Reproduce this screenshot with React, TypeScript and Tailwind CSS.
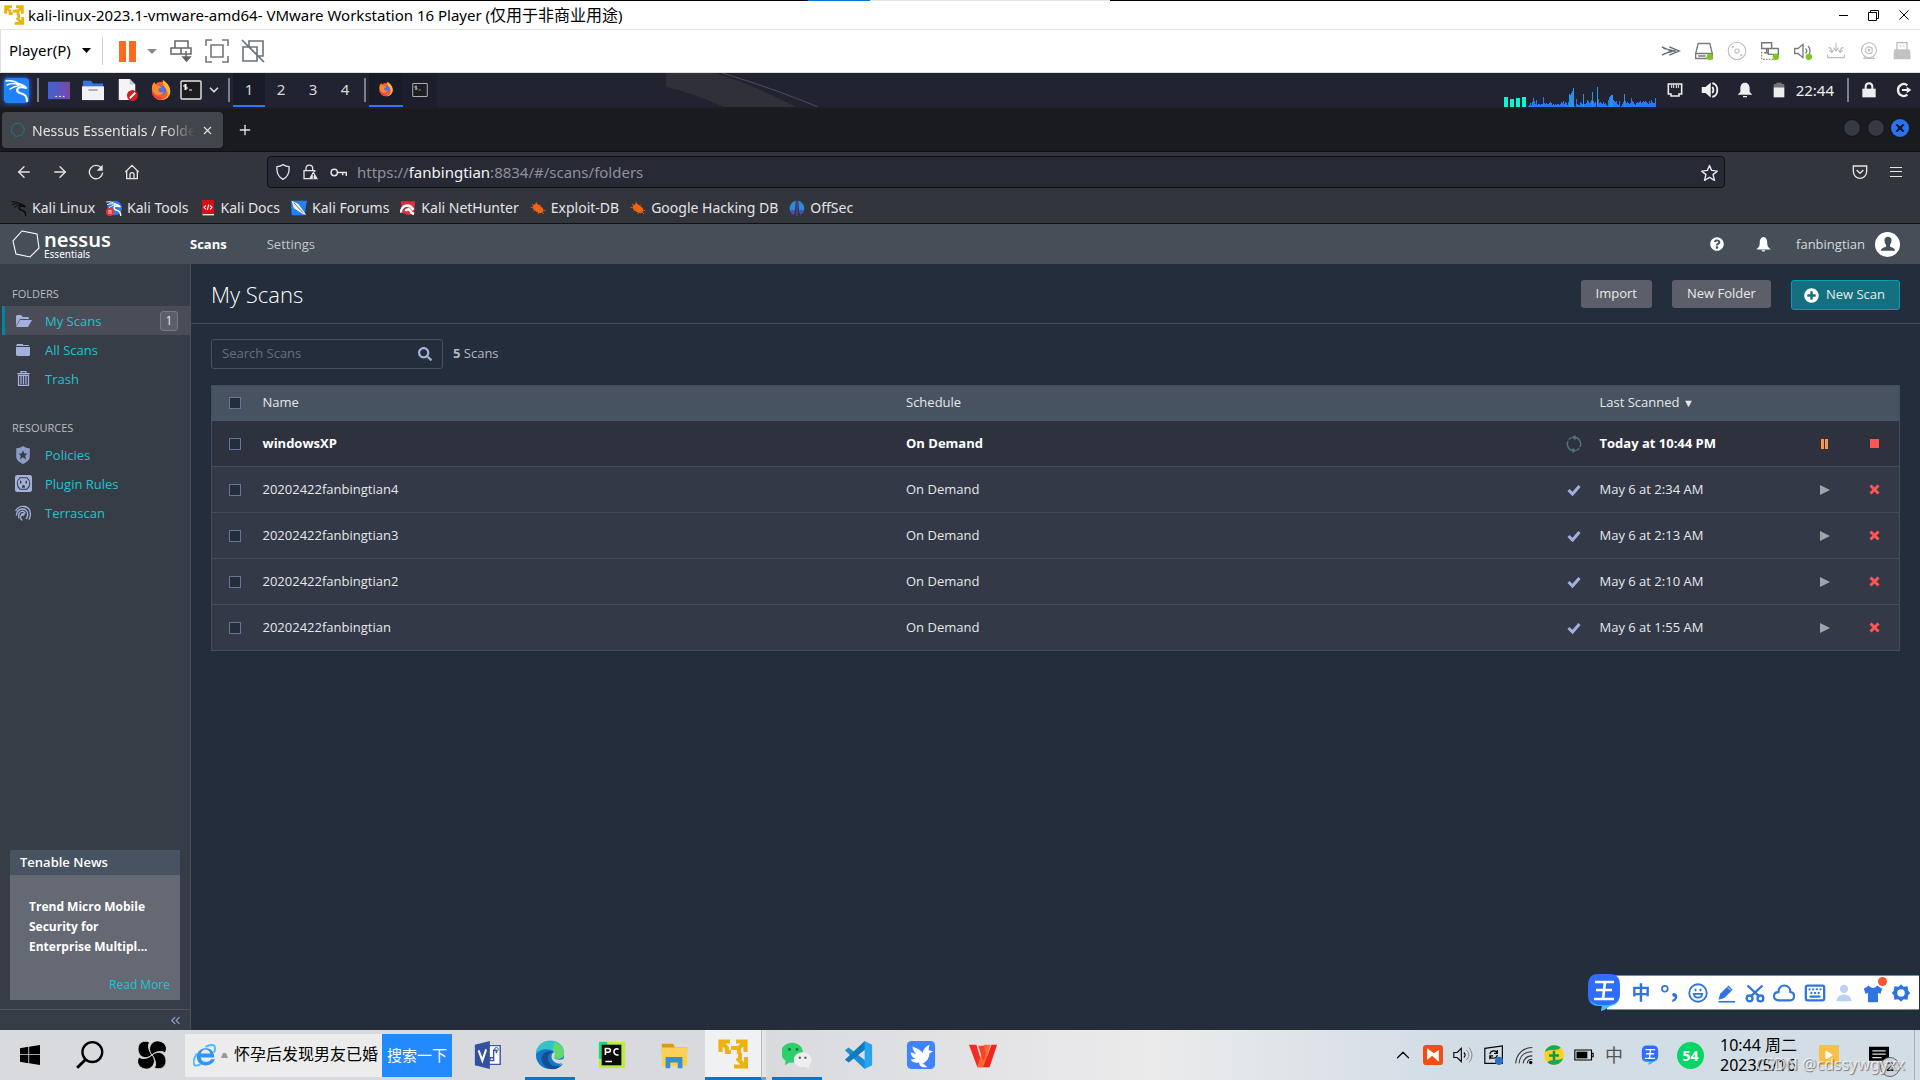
import React from 'react';
import { ArrowLeft, ArrowRight, ChevronDown, ChevronUp, ChevronsLeft, Keyboard, Plus, X } from 'lucide-react';
import { FaPlay, FaPlusCircle, FaQuestionCircle, FaSearch } from 'react-icons/fa';

interface SvgProps {
  className?: string;
  box?: string;
  children: React.ReactNode;
}

const Svg: React.FC<SvgProps> = ({ className = 'size-5', box = '0 0 24 24', children }) => (
  <svg viewBox={box} className={`shrink-0 ${className}`} fill="none" aria-hidden="true">
    {children}
  </svg>
);

interface SlotProps {
  label: string;
  className?: string;
  children: React.ReactNode;
}

const Slot: React.FC<SlotProps> = ({ label, className = '', children }) => (
  <button type="button" aria-label={label} className={`flex shrink-0 items-center justify-center ${className}`}>
    {children}
  </button>
);

/* ---------- shared drawings ---------- */

const VmwareLogo = ({ className = 'size-5' }) => (
  <Svg className={className} box="0 0 30 30">
    <path d="M12 2.500H2.500V13M2 2l7 7v4h4M18 2.500h9.500V13M28 2l-7 7h-8M21 9v6M22 14v6M28 18v9.500H16M28 28l-9-9" stroke="#edb30c" strokeWidth="4.200" />
  </Svg>
);

const Dragon = () => (
  <g stroke="currentColor" strokeLinecap="round" strokeLinejoin="round">
    <path d="M1 3c5-1 9 0 13 3M2 7c4-2 8-2 12 0M5 11c3-2 5-3 8-3" strokeWidth="1.5" />
    <path d="M14 6c3 1 6 2 7 4l-4-1c-6 0-6 5-2 6 5 1 7 3 7 8" strokeWidth="2.2" />
  </g>
);

const Firefox = ({ className = 'size-5' }) => (
  <Svg className={className}>
    <circle cx="12" cy="13" r="10" fill="#ff5a2b" />
    <path d="M14 1c5 3 9 8 8 14-1 5-5 8-10 8 5-1 8-4 7-9-1-4-6-6-5-13z" fill="#ffb92e" />
    <circle cx="12.5" cy="12.5" r="5.2" fill="#5b6fd8" />
    <path d="M2 11c0-4 1-6 3-8 0 2 1 3 3 4 2 0 3 1 5 2-2 1-4 1-4 3 1 3 4 3 6 2-1 4-7 5-10 2-2-2-2-4-3-5z" fill="#ff8a2a" />
    <path d="M2 13c1 7 8 10 13 8-6 0-10-3-13-8z" fill="#e52b5c" />
  </Svg>
);

const Wubi = ({ className = 'size-10' }) => (
  <Svg className={className} box="0 0 34 39">
    <path d="M11 1h12c7 0 10 4 10 11v9c0 6-3 10-9 11-3 2-5 5-10 6l1-5H11C4 33 1 29 1 22v-9C1 5 4 1 11 1z" fill="#2f6dff" />
    <path d="M3 27c3 5 12 6 20 5 5-1 8-3 9-6-1 5-6 7-9 7-3 2-5 4-9 5l1-5c-6 0-10-1-12-6z" fill="#42c4ff" />
    <path d="M8 9h19M9 17h16M7 26h20M18 9l-2 17" stroke="#fff" strokeWidth="2.6" />
  </Svg>
);

/* ---------- VMware window ---------- */

const TitleBar = () => (
  <header className="bg-white">
    <div className="flex h-px bg-black">
      <div className="ml-[42.1%] w-[3.2%] bg-[#0078d7]" />
      <div className="w-[12.5%] bg-[#e5e5e5]" />
    </div>
    <div className="flex h-[29px] items-center border-b border-[#e3e3e3] pl-1 pr-[6px] text-[15px] text-black">
      <VmwareLogo className="size-5" />
      <h1 className="ml-1 whitespace-nowrap">kali-linux-2023.1-vmware-amd64- VMware Workstation 16 Player (<span className="text-[16px] leading-5">仅用于非商业用途</span>)</h1>
      <div className="ml-auto flex gap-[10px]">
        <Slot label="Minimize" className="size-5"><Svg box="0 0 20 20"><path d="M5 10.500h9" stroke="#000" /></Svg></Slot>
        <Slot label="Restore" className="size-5"><Svg box="0 0 20 20"><path d="M4.500 7.500h8v8h-8zM6.500 7.500v-2h8v8h-2" stroke="#000" /></Svg></Slot>
        <Slot label="Close" className="size-5"><Svg box="0 0 20 20"><path d="M5.500 5.500l9 9M14.500 5.500l-9 9" stroke="#000" /></Svg></Slot>
      </div>
    </div>
  </header>
);

const GreenDot = () => <circle cx="19" cy="19" r="3.8" fill="#7ac818" />;

const devices = [
  { name: 'Collapse', art: <path d="M1 7l11 5-11 5M10 7l12 5-12 5M3 9l15 3-15 3" stroke="#5d6873" strokeWidth="1.5" /> },
  { name: 'Hard disk', art: <><path d="M5 3h14l3 12H2zM2 15v6h20v-6M5 18h9" stroke="#7b7b7b" strokeWidth="1.6" /><GreenDot /></> },
  { name: 'CD/DVD', art: <g stroke="#bdbdbd" strokeWidth="1.3"><circle cx="12" cy="12" r="10.500" /><circle cx="12" cy="12" r="2.500" /><path d="M6 8l2-2M16 18l2-2" strokeWidth="2" /></g> },
  { name: 'Network', art: <><path d="M2 2h12v7H2zM10 9h12v7H10zM8 9v5M5 14h6" stroke="#777" strokeWidth="1.7" /><path d="M2 13v9h14" stroke="#888" strokeDasharray="2 1.500" strokeWidth="1.5" /><GreenDot /></> },
  { name: 'Sound', art: <><path d="M2 9h4l6-5v16l-6-5H2zM15 9c2 2 2 4 0 6M18 6c3 3 3 8 1 11" stroke="#7b7b7b" strokeWidth="1.6" /><GreenDot /></> },
  { name: 'Printer', art: <path d="M12 2v9M9 8l3 4 3-4M3 8c3 0 4 2 4 5M4 11l3 3 2-3M21 8c-3 0-4 2-4 5M15 11l2 3 3-3M2 16v4h20v-4" stroke="#bdbdbd" strokeWidth="1.4" /> },
  { name: 'Camera', art: <g stroke="#bdbdbd" strokeWidth="1.3"><circle cx="12" cy="11" r="9" /><circle cx="12" cy="11" r="4" /><circle cx="12" cy="11" r="1" /><path d="M7 19l-1 2h12l-1-2" /></g> },
  { name: 'USB', art: <><path d="M6 11V2h12v9" stroke="#b5b5b5" strokeWidth="1.4" /><path d="M9 6h2M13 6h2" stroke="#b5b5b5" /><path d="M3 10h18l1 3v9H2v-9z" fill="#c2c2c2" /></> },
];

const VmToolbar = () => (
  <nav aria-label="Player toolbar" className="flex h-[43px] items-center border-b border-l border-[#e0e0e0] bg-white pl-2 pr-2 text-black">
    <button type="button" className="flex items-center gap-[11px] pb-[2px] text-[15px]">
      Player(P)
      <Svg className="h-[5px] w-[9px]" box="0 0 9 5"><path d="M0 0h9L4.500 5z" fill="#000" /></Svg>
    </button>
    <div className="ml-[11px] h-7 w-px bg-[#cfcfcf]" />
    <Slot label="Suspend" className="ml-4"><Svg className="h-[21px] w-[17px]" box="0 0 17 21"><path d="M0 0h7v21H0zM10 0h7v21h-7z" fill="#ff6a1f" /></Svg></Slot>
    <Slot label="Power menu" className="ml-[11px]"><Svg className="h-[5px] w-[10px]" box="0 0 10 5"><path d="M0 0h10L5 5z" fill="#888" /></Svg></Slot>
    <div className="ml-3 flex gap-3">
      <Slot label="Send keys"><Svg className="size-6"><g stroke="#666" strokeWidth="1.5"><path d="M6 2h13v7H6zM2 9h10v6H2zM12 9h10v6H12zM17 12v9" /><path d="M14 18l3.500 4 3.500-4z" fill="#555" /></g></Svg></Slot>
      <Slot label="Full screen"><Svg className="size-6"><path d="M1 7V1h6M17 1h6v6M23 17v6h-6M7 23H1v-6M6 6h12v12H6z" stroke="#777" strokeWidth="1.6" /></Svg></Slot>
      <Slot label="Unity"><Svg className="size-6"><path d="M8 8V2h14v15h-6M2 8h14v14H2zM1 1l22 22" stroke="#68727c" strokeWidth="1.6" /></Svg></Slot>
    </div>
    <div className="ml-auto flex gap-[13px]">
      {devices.map((d) => <Slot key={d.name} label={d.name}><Svg>{d.art}</Svg></Slot>)}
    </div>
  </nav>
);

/* ---------- Kali desktop panel ---------- */

const load = [
  1, 2, 4, 2, 5, 9, 6, 3, 7, 2, 3, 3, 2, 3, 3, 10, 4, 3, 4, 3, 3, 4, 5, 4, 2, 3, 2, 3, 2, 3, 3, 2, 3, 5, 4, 6, 3, 5, 4, 2, 5,
  13, 12, 14, 16, 19, 1, 0, 8, 3, 2, 2, 5, 4, 3, 13, 3, 3, 4, 7, 6, 4, 5, 7, 15, 6, 4, 5, 0, 20, 8, 4, 5, 4, 3, 5, 3, 4, 2, 1,
  7, 10, 11, 12, 12, 7, 6, 5, 6, 3, 2, 6, 0, 1, 3, 5, 13, 6, 4, 5, 4, 3, 4, 9, 6, 5, 3, 2, 4, 5, 4, 5, 6, 4, 5, 6, 5, 6, 5, 4, 3, 6, 4, 7, 5, 4, 4, 9,
];

const Terminal = ({ className = 'size-[22px]' }) => (
  <Svg className={className} box="0 0 22 20">
    <rect x="1" y="1" width="20" height="18" rx="1" fill="#1c1c1c" stroke="#e8e8e8" strokeWidth="1.4" />
    <path d="M7 5H4v2h3v2H4M5.500 4v6M9 10h3" stroke="#fff" />
  </Svg>
);

const Divider = ({ className = '' }) => <div className={`h-6 w-[2px] shrink-0 bg-[#7e7f87] ${className}`} />;

const KaliPanel = () => (
  <div className="relative flex h-9 items-center overflow-hidden border-b-2 border-[#1e1f25] bg-[#222331] text-[15px] text-[#d8d8dc]">
    <svg viewBox="0 0 190 34" className="absolute left-[34.7%] top-0 h-[34px] w-[190px]" aria-hidden="true">
      <path d="M0 0h50c30 10 55 21 80 34H58C42 27 20 18 0 14z" fill="#303138" />
      <path d="M56 0c30 9 65 21 96 34" stroke="#4d4e55" fill="none" />
    </svg>
    <div className="relative flex h-full items-center">
      <Slot label="Applications" className="ml-1 size-[25px] rounded-sm bg-[#1f82fb] text-white shadow-[0_0_5px_#2374ff]">
        <Svg className="size-6"><Dragon /></Svg>
      </Slot>
      <Divider className="ml-2" />
      <Slot label="Show desktop" className="ml-[9px]"><Svg className="size-[22px]"><path d="M0 3h24v19H0z" fill="url(#desk)" /><defs><linearGradient id="desk"><stop stopColor="#3f62d6" /><stop offset="1" stopColor="#7a48a5" /></linearGradient></defs><path d="M8 19h2m2 0h2m2 0h2" stroke="#fff" /></Svg></Slot>
      <Slot label="Files" className="ml-3"><Svg className="size-[22px]"><path d="M1 2h9l2 3h11v7H1z" fill="#3972e5" /><path d="M0 8h24v15H0z" fill="#f1f1f5" /><path d="M7 12h10" stroke="#aaa" strokeWidth="2" /></Svg></Slot>
      <Slot label="Text editor" className="ml-3"><Svg className="size-[22px]"><path d="M3 0h12l6 6v17H3z" fill="#f4f4f6" /><path d="M15 0v6h6z" fill="#c5c5cc" /><circle cx="18" cy="18" r="6" fill="#d41d20" /><path d="M15 21l6-6" stroke="#fff" strokeWidth="2" /></Svg></Slot>
      <Slot label="Firefox" className="ml-3"><Firefox className="size-[22px]" /></Slot>
      <Slot label="Terminal" className="ml-2"><Terminal /></Slot>
      <Slot label="More launchers" className="ml-[2px] size-5"><ChevronDown size={14} strokeWidth={3} /></Slot>
      <Divider className="ml-1" />
      <div className="ml-[3px] flex h-full">
        <button type="button" className="w-8 border-b-2 border-[#2a78f5] bg-[#1a1b29]">1</button>
        {['2', '3', '4'].map((n) => <button key={n} type="button" className="w-8 border-b-2 border-transparent">{n}</button>)}
      </div>
      <Divider className="ml-[3px]" />
      <Slot label="Nessus window" className="ml-[3px] h-full w-[34px] border-b-2 border-[#2a78f5] bg-[#1a1b29]"><Firefox className="size-4" /></Slot>
      <Slot label="Terminal window" className="h-full w-[34px] bg-[#1c1d29] opacity-70"><Terminal className="size-4" /></Slot>
    </div>
    <div className="relative ml-auto flex h-full items-center pr-2 text-[#eee]">
      <svg viewBox="0 0 152 34" className="h-[34px] w-[152px]" aria-hidden="true">
        <path d="M0 24h4v10H0zM6 26h4v8H6zM12 25h4v9h-4zM18 24h4v10h-4z" fill="#0ff5d4" />
        {load.map((v, i) => <rect key={i} x={24 + i} y={34 - v} width="1" height={v} fill={v > 10 ? '#2794e8' : '#2878f8'} />)}
      </svg>
      <Slot label="Network" className="ml-[11px]"><Svg className="size-4"><path d="M2 3h20v15h-4v3H6v-3H2z" stroke="#eee" strokeWidth="2.400" /><path d="M7 4v5m3-5v5m4-5v5m3-5v5" stroke="#eee" strokeWidth="1.5" /></Svg></Slot>
      <Slot label="Volume" className="ml-[18px]"><Svg className="size-[18px]"><path d="M1 8h5l7-6v20l-7-6H1z" fill="#eee" /><path d="M15 8c2 2 2 6 0 8M15 3c9 1 9 17 0 18" stroke="#eee" strokeWidth="2.500" /></Svg></Slot>
      <Slot label="Notifications" className="ml-[18px]"><Svg className="size-4"><path d="M12 1c5 0 7 4 7 9v5l4 4H1l4-4v-5c0-5 2-9 7-9zM9 21h6v2H9z" fill="#eee" /></Svg></Slot>
      <Slot label="Battery" className="ml-[18px]"><Svg className="size-4"><path d="M8 1h8v2h4v5H4V3h4z" fill="#777" /><path d="M4 8h16v15H4z" fill="#eee" /></Svg></Slot>
      <time className="ml-[9px]">22:44</time>
      <Divider className="ml-[13px]" />
      <Slot label="Lock" className="ml-3"><Svg className="size-4"><path d="M7 11V7c0-7 10-7 10 0v4" stroke="#eee" strokeWidth="3" /><path d="M2 10h20v13H2z" fill="#eee" /></Svg></Slot>
      <Slot label="Log out" className="ml-[19px]"><Svg className="size-4"><path d="M17 5c-6-5-14 0-14 7s8 12 14 7" stroke="#eee" strokeWidth="3.500" /><path d="M9 12h8" stroke="#eee" strokeWidth="3" /><path d="M16 7l7 5-7 5z" fill="#eee" /></Svg></Slot>
    </div>
  </div>
);

/* ---------- Firefox ---------- */

const bookmarks = [
  { label: 'Kali Linux', art: <g className="text-[#0c0c0e]"><Dragon /></g> },
  { label: 'Kali Tools', art: <><circle cx="13" cy="12" r="11" fill="#2d78ee" /><g className="text-white"><Dragon /></g><circle cx="6" cy="18" r="6" fill="#ee2c35" /><path d="M4 16h4M4.500 16v5M7.500 16v5" stroke="#fff" /></> },
  { label: 'Kali Docs', art: <><path d="M3 0h18v23H3z" fill="#d60f16" /><path d="M4 22h17" stroke="#eee" strokeWidth="2" /><path d="M9 8l-3 3 3 3M15 8l3 3-3 3M13 7l-2 8" stroke="#fff" strokeWidth="1.6" /></> },
  { label: 'Kali Forums', art: <><path d="M0 1h24l-4 22H1z" fill="#2580f5" /><path d="M1 1l10 5 8 11 4 6-7-3L4 12z" fill="#f3f3f3" /><path d="M4 4l14 15" stroke="#333" /></> },
  { label: 'Kali NetHunter', art: <><path d="M1 2h22l-2 18-8 3-9-3z" fill="#e22b3c" /><path d="M2 19c0-11 12-15 18-4M9 17c1-5 6-4 8 2l4 2" stroke="#fff" strokeWidth="4" /><path d="M3 20c0-7 6-9 9-8" stroke="#222" /></> },
  { label: 'Exploit-DB', art: <Bug /> },
  { label: 'Google Hacking DB', art: <Bug /> },
  { label: 'OffSec', art: <><path d="M10 1C-2 5-1 19 7 22c2-5 3-14 3-21zM14 1c12 4 11 18 3 21-2-5-3-14-3-21z" fill="#2f8ad6" /><path d="M2 15c1 4 3 6 5 7l2-7zM22 15c-1 4-3 6-5 7l-2-7z" fill="#5044c8" /><path d="M12 1v23" stroke="#6a45d8" strokeWidth="1.500" /></> },
];

function Bug() {
  return (
    <g>
      <path d="M4 9l5-4 4 2 6 5 1 5-4 3-6-2-5-4z" fill="#ef6313" />
      <path d="M3 6l5 4M9 3l2 5M16 7l-2 3M23 16l-4-1M21 21l-3-3M12 21l1-3M5 17l3-3M1 11l5 1" stroke="#ef6313" strokeWidth="1.3" />
    </g>
  );
}

const Browser = () => (
  <div className="text-[15px] text-[#e4e4e8]">
    <div className="flex h-[43px] items-center border-b border-[#0f1014] bg-[#1a1b1f] pb-1 pl-[2px] pr-[11px]">
      <div role="tab" aria-selected="true" className="mt-1 flex h-9 w-[221px] items-center rounded bg-[#43454c] px-2 shadow">
        <Svg className="size-4"><path d="M8 2l9 1 5 8-4 8-9 3-7-7 1-8z" stroke="#21707d" strokeWidth="1.6" /></Svg>
        <div className="ml-[6px] flex-1 overflow-hidden whitespace-nowrap text-[14px] [mask-image:linear-gradient(to_right,black_82%,transparent)]">Nessus Essentials / Folder</div>
        <Slot label="Close tab" className="ml-1 size-4"><X size={13} strokeWidth={2} /></Slot>
      </div>
      <Slot label="New tab" className="ml-3 mt-1 size-5"><Plus size={16} strokeWidth={2} /></Slot>
      <div className="ml-auto flex gap-[6px]">
        <button type="button" aria-label="Minimize window" className="size-[18px] rounded-full border border-[#101115] bg-[#343944]" />
        <button type="button" aria-label="Maximize window" className="size-[18px] rounded-full border border-[#101115] bg-[#343944]" />
        <Slot label="Close window" className="size-[18px] rounded-full bg-[#2a73f0] text-[#101522]"><X size={12} strokeWidth={4} /></Slot>
      </div>
    </div>
    <div className="flex h-10 items-center bg-[#33353c] pl-[14px] pr-4">
      <div className="flex gap-4">
        <Slot label="Back" className="size-5"><ArrowLeft size={18} strokeWidth={1.8} /></Slot>
        <Slot label="Forward" className="size-5"><ArrowRight size={18} strokeWidth={1.8} /></Slot>
        <Slot label="Reload" className="size-5"><Svg className="size-4"><path d="M20 6a10 10 0 1 0 2 7" stroke="currentColor" strokeWidth="2" /><path d="M22 1v9h-9z" fill="currentColor" /></Svg></Slot>
        <Slot label="Home" className="size-5"><Svg className="size-4"><path d="M2 12L12 2l10 10M4 10v12h16V10M9 22v-6c0-4 6-4 6 0v6" stroke="currentColor" strokeWidth="2" /></Svg></Slot>
      </div>
      <div className="ml-[125px] flex h-8 w-full max-w-[1458px] items-center rounded border border-[#0d0e14] bg-[#272935] pl-[7px] pr-[6px]">
        <Svg className="size-4"><path d="M12 1c3 2 6 3 9 3 1 10-3 16-9 19C6 20 2 14 3 4c3 0 6-1 9-3z" stroke="currentColor" strokeWidth="2" /></Svg>
        <Svg className="ml-[11px] size-4"><path d="M6 10V7c0-7 10-7 10 0v3M11 22H3V10h16v2" stroke="currentColor" strokeWidth="2" /><path d="M17 11l7 12H10z" fill="currentColor" /><path d="M17 15v4m0 1v2" stroke="#272935" strokeWidth="1.6" /></Svg>
        <Svg className="ml-3 size-[17px]"><circle cx="6" cy="12" r="4.500" stroke="currentColor" strokeWidth="2" /><path d="M11 12h12v5M18 12v4" stroke="currentColor" strokeWidth="2" /></Svg>
        <a href="#/scans/folders" className="ml-[10px] text-[#8f9099]">https://<span className="text-[#f3f3f6]">fanbingtian</span>:8834/#/scans/folders</a>
        <Slot label="Bookmark" className="ml-auto"><Svg className="size-[17px]"><path d="M12 2l3 7 8 1-6 5 2 8-7-4-7 4 2-8-6-5 8-1z" stroke="currentColor" strokeWidth="2" strokeLinejoin="round" /></Svg></Slot>
      </div>
      <Slot label="Pocket" className="ml-auto"><Svg className="size-4"><path d="M2 3h20v8c0 14-20 14-20 0z" stroke="currentColor" strokeWidth="2" /><path d="M7 9l5 5 5-5" stroke="currentColor" strokeWidth="2" /></Svg></Slot>
      <Slot label="Menu" className="ml-5"><Svg className="size-4" box="0 0 16 16"><path d="M2 3.500h12M2 7.500h12M2 12.500h12" stroke="currentColor" /></Svg></Slot>
    </div>
    <nav aria-label="Bookmarks" className="flex h-8 items-center gap-[11px] border-b border-[#111217] bg-[#33353c] pl-[11px] text-[14px]">
      {bookmarks.map((b) => (
        <a key={b.label} href="#" className="flex items-center gap-[5px] whitespace-nowrap">
          <Svg className="size-4">{b.art}</Svg>
          {b.label}
        </a>
      ))}
    </nav>
  </div>
);

/* ---------- Nessus ---------- */

const NessusHeader = () => (
  <header className="flex h-10 items-center bg-[#464e57] pl-3 pr-5 font-['Open_Sans',sans-serif] text-[13px] text-[#d5d8dc]">
    <a href="#" aria-label="Nessus Essentials" className="flex w-[178px] items-center gap-1 text-white">
      <Svg className="size-7" box="0 0 28 28"><path d="M10 1l15 3 2 14-9 9-14-3L1 11z" stroke="currentColor" strokeWidth="1.1" /></Svg>
      <div className="flex flex-col pt-[2px] font-['Noto_Sans',sans-serif]">
        <span className="text-[20px] font-semibold leading-[17px]">nessus</span>
        <span className="text-[10px] leading-3">Essentials</span>
      </div>
    </a>
    <nav className="flex gap-10 pt-px">
      <a href="#/scans" className="font-bold text-white">Scans</a>
      <a href="#/settings" className="text-[#c3c7cc]">Settings</a>
    </nav>
    <Slot label="Help" className="ml-auto text-white"><FaQuestionCircle size={14} /></Slot>
    <Slot label="Alerts" className="ml-8 text-white"><Svg className="size-[15px]"><path d="M12 0c5 1 6 5 6 10 0 5 2 7 5 9v1H1v-1c3-2 5-4 5-9 0-5 1-9 6-10zM9 21h6c0 3-6 3-6 0z" fill="#fff" /></Svg></Slot>
    <span className="ml-[25px] pt-px">fanbingtian</span>
    <Slot label="Account" className="ml-[10px] size-[25px] rounded-full bg-white"><Svg className="size-4"><path d="M12 1c7 0 6 8 3 12v3c3 1 7 2 8 6H1c1-4 5-5 8-6v-3C6 9 5 1 12 1z" fill="#464e57" /></Svg></Slot>
  </header>
);

const folders = [
  { label: 'My Scans', icon: <Svg className="h-[14px] w-[17px]" box="0 0 17 14"><path d="M1 11V2l1-1h4l2 2h5l1 1v1H5L1 12z" fill="currentColor" /><path d="M5 6h12l-4 7H1z" fill="currentColor" /></Svg>, count: 1 },
  { label: 'All Scans', icon: <Svg className="h-[14px] w-[14px]" box="0 0 14 14"><path d="M1 1h6v1h6v1H0zM0 4h14v8l-1 1H1l-1-1z" fill="currentColor" /></Svg> },
  { label: 'Trash', icon: <Svg className="size-[15px]"><path d="M4 7h16v16H4zM2 4h20M8 4V1h8v3" stroke="currentColor" strokeWidth="2" /><path d="M8 8v13m4-13v13m4-13v13" stroke="currentColor" strokeWidth="2" /></Svg> },
];

const resources = [
  { label: 'Policies', icon: <Svg className="size-[18px]"><path d="M12 0c3 2 6 3 9 3v12c0 4-5 7-9 9-4-2-9-5-9-9V3c3 0 6-1 9-3z" fill="#8d9cc6" /><path d="M12 6l2 4h4l-3 3 1 5-4-3-4 3 1-5-3-3h4z" fill="#373d46" /></Svg> },
  { label: 'Plugin Rules', icon: <Svg className="size-[17px]"><rect width="24" height="24" rx="3" fill="#a3b0dc" /><path d="M7 4h10c5 4 5 12 0 16H7C2 16 2 8 7 4z" stroke="#373d46" strokeWidth="1.500" /><path d="M8 8v4m8-4v4" stroke="#373d46" strokeWidth="2" /><path d="M10 18c-1-5 5-5 4 0z" fill="#373d46" /></Svg> },
  { label: 'Terrascan', icon: <Svg className="size-4"><path d="M1 9C6-2 24 0 23 15c0 3-1 5-2 7M2 16C3 3 19 3 19 14c0 4-1 6-3 7M6 20C3 8 15 7 15 13M11 23c-4-2-3-5-1-9" stroke="#a3b0dc" strokeWidth="2" /><circle cx="12" cy="14" r="2.500" fill="#a3b0dc" /></Svg> },
];

interface SideItemProps {
  label: string;
  icon: React.ReactNode;
  count?: number;
}

const SideItem: React.FC<SideItemProps> = ({ label, icon, count }) => (
  <li>
    <a href="#" className={`ml-[2px] flex h-[29px] items-center border-l-[3px] pr-3 text-[13px] text-[#1fc3d1] ${count ? 'border-[#00889a] bg-[#4a4d57]' : 'border-transparent'}`}>
      <span className="ml-2 flex w-5 justify-center text-[#a3b0dc]">{icon}</span>
      <span className="ml-3 pt-[2px]">{label}</span>
      {count && <span className="ml-auto flex h-5 w-[18px] items-center justify-center rounded-[3px] border border-[#777a82] bg-[#5c5f69] text-[12px] text-[#eee]">{count}</span>}
    </a>
  </li>
);

const Sidebar = () => (
  <aside className="flex w-[191px] shrink-0 flex-col border-r border-[#4a4f59] bg-[#373d46]">
    <h2 className="mt-[18px] pl-3 text-[11px] leading-6 text-[#b9bcc1]">FOLDERS</h2>
    <ul>{folders.map((f) => <SideItem key={f.label} {...f} />)}</ul>
    <h2 className="mt-[23px] pl-3 text-[11px] leading-6 text-[#b9bcc1]">RESOURCES</h2>
    <ul>{resources.map((r) => <SideItem key={r.label} {...r} />)}</ul>
    <section className="mx-[10px] mt-auto">
      <h2 className="bg-[#475361] pl-[10px] text-[13px] font-semibold leading-[25px] text-white">Tenable News</h2>
      <div className="bg-[#656974] px-[10px] pb-[5px] pt-[22px] text-[12px]">
        <p className="pl-[9px] font-bold leading-5 text-white">Trend Micro Mobile<br />Security for<br />Enterprise Multipl...</p>
        <a href="#" className="mt-[18px] block text-right leading-5 text-[#1fc3d1]">Read More</a>
      </div>
    </section>
    <div className="mt-[9px] flex h-[21px] items-center justify-end border-t border-[#4f535d] pr-[7px]">
      <Slot label="Collapse sidebar" className="text-[#8f9dc4]"><ChevronsLeft size={15} strokeWidth={2} /></Slot>
    </div>
  </aside>
);

const scans = [
  { name: 'windowsXP', when: 'Today at 10:44 PM', running: true },
  { name: '20202422fanbingtian4', when: 'May 6 at 2:34 AM' },
  { name: '20202422fanbingtian3', when: 'May 6 at 2:13 AM' },
  { name: '20202422fanbingtian2', when: 'May 6 at 2:10 AM' },
  { name: '20202422fanbingtian', when: 'May 6 at 1:55 AM' },
];

const Tick = ({ label }: { label: string }) => (
  <input type="checkbox" aria-label={label} className="ml-[17px] block size-3 appearance-none border border-[#65769a] bg-[#242d3b]" />
);

const ScanTable = () => (
  <table className="mt-4 w-full table-fixed border-collapse border border-[#464c59] text-left text-[13px] text-[#e6e8ea]">
    <colgroup>
      <col className="w-[51px]" />
      <col />
      <col />
      <col className="w-[50px]" />
      <col className="w-[200px]" />
      <col className="w-[50px]" />
      <col className="w-[50px]" />
    </colgroup>
    <thead>
      <tr className="h-[35px] border-b border-[#4c5362] bg-[#475361]">
        <th><Tick label="Select all scans" /></th>
        <th className="font-normal">Name</th>
        <th className="font-normal">Schedule</th>
        <th aria-label="Status" />
        <th className="font-normal">Last Scanned <span className="text-[11px]">▼</span></th>
        <th aria-label="Control" />
        <th aria-label="Delete" />
      </tr>
    </thead>
    <tbody>
      {scans.map((s) => (
        <tr key={s.name} className={`h-[46px] border-b border-[#464c59] ${s.running ? 'bg-[#2d323e] font-bold text-white' : 'bg-[#333947]'}`}>
          <td><Tick label={`Select ${s.name}`} /></td>
          <td>{s.name}</td>
          <td>On Demand</td>
          <td>
            <div className="flex justify-center pr-px text-[#a3b0dc]">
              {s.running ? (
                <Svg className="size-[18px]"><path d="M13 3a9 9 0 0 1 7 13M11 21A9 9 0 0 1 4 8" stroke="#4f7878" strokeWidth="2" /><path d="M14 0v7l-5-4zM10 24v-7l5 4z" fill="#4f7878" /><path d="M9 3.500C7 4 6 5 5 6M15 20.500c2-.5 3-1.500 4-2.500" stroke="#4f7878" strokeWidth="2" /></Svg>
              ) : <Svg className="size-[14px]" box="0 0 14 14"><path d="M1.500 7l4 4 7-8" stroke="currentColor" strokeWidth="3" /></Svg>}
            </div>
          </td>
          <td>{s.when}</td>
          <td>
            <Slot label={s.running ? 'Pause' : 'Launch'} className="w-full text-[#9aa6a8]">
              {s.running
                ? <Svg className="h-[10px] w-[7px]" box="0 0 7 10"><path d="M0 0h3v10H0zM4 0h3v10H4z" fill="#f79645" /></Svg>
                : <Svg className="size-[10px]" box="0 0 10 10"><path d="M0 0l10 5-10 5z" fill="currentColor" /></Svg>}
            </Slot>
          </td>
          <td>
            <Slot label={s.running ? 'Stop' : 'Delete'} className="w-full text-[#ff5555]">
              {s.running ? <span className="size-[9px] bg-[#ff5555]" /> : <Svg className="size-[11px]" box="0 0 11 11"><path d="M1.500 1.500l8 8M9.500 1.500l-8 8" stroke="currentColor" strokeWidth="3" /></Svg>}
            </Slot>
          </td>
        </tr>
      ))}
    </tbody>
  </table>
);

const Nessus = () => (
  <div className="flex flex-1 flex-col font-['Open_Sans',sans-serif]">
    <NessusHeader />
    <div className="flex flex-1 bg-[#242d3b]">
      <Sidebar />
      <main className="min-w-0 flex-1">
        <div className="flex h-[60px] items-start gap-5 border-b border-[#454c58] px-5 pt-4 text-[13px] text-[#e8eaec]">
          <h1 className="mr-auto text-[22px] font-light leading-7 text-white">My Scans</h1>
          <button type="button" className="h-7 rounded-[3px] bg-[#5c5f69] px-[15px]">Import</button>
          <button type="button" className="h-7 rounded-[3px] bg-[#5c5f69] px-[15px]">New Folder</button>
          <button type="button" className="flex h-[30px] items-center gap-[7px] rounded-[3px] border border-[#00a0b4] bg-[#14707f] pl-3 pr-[14px]">
            <FaPlusCircle size={15} color="#fff" />
            New Scan
          </button>
        </div>
        <div className="px-5 pt-[15px]">
          <div className="flex items-center gap-[10px] text-[13px] text-[#b4b8bd]">
            <label className="flex h-[30px] w-[232px] items-center rounded-[3px] border border-[#4a515e] px-[10px]">
              <input type="text" aria-label="Search Scans" placeholder="Search Scans" className="min-w-0 flex-1 bg-transparent outline-none placeholder:text-[#686f7a]" />
              <FaSearch size={14} color="#a3b0dc" />
            </label>
            <span><b>5</b> Scans</span>
          </div>
          <ScanTable />
        </div>
      </main>
    </div>
  </div>
);

/* ---------- input method bar ---------- */

const ImeBar = () => (
  <div className="fixed bottom-[68px] right-0 flex h-[39px] w-[333px] items-center text-[#2f74e0]">
    <div className="absolute inset-y-[2px] left-5 right-px border-y border-[#5b8fd8] bg-white" />
    <div className="relative flex w-full items-center">
      <Wubi className="h-[39px] w-[34px]" />
      <div className="ml-[10px] flex flex-1 items-center justify-between pr-[9px]">
        <button type="button" className="w-5 text-[19px] font-bold leading-5">中</button>
        <Slot label="Punctuation"><Svg className="size-5"><circle cx="7" cy="7" r="3.500" stroke="currentColor" strokeWidth="2" /><path d="M18 12c6 1 5 9-2 11v-3c2-1 3-2 3-3-4-1-4-5-1-5z" fill="currentColor" /></Svg></Slot>
        <Slot label="Emoji"><Svg className="size-5"><g stroke="currentColor" strokeWidth="2.200"><circle cx="12" cy="12" r="10.500" /><path d="M7 13c1 6 9 6 10 0zM9 7v3M15 7v3" /></g></Svg></Slot>
        <Slot label="Handwriting"><Svg className="size-5"><path d="M3 20l2-7L15 3l5 5L10 18z" fill="currentColor" /><path d="M14 5l4 4" stroke="#fff" /><path d="M3 22.500h20" stroke="currentColor" strokeWidth="2" /></Svg></Slot>
        <Slot label="Clip"><Svg className="size-5"><g stroke="currentColor" strokeWidth="2.800"><path d="M3 3l14 13M21 3L7 16" /><circle cx="5.500" cy="18.500" r="3.500" /><circle cx="18.500" cy="18.500" r="3.500" /></g></Svg></Slot>
        <Slot label="Cloud"><Svg className="size-[22px]"><path d="M6 20c-7-1-6-9 0-9 0-10 13-9 13 0 6 1 5 9-1 9z" stroke="currentColor" strokeWidth="2.300" /></Svg></Slot>
        <Slot label="Keyboard"><Keyboard size={22} strokeWidth={2.5} /></Slot>
        <Slot label="Account" className="text-[#bcd0f6]"><Svg className="size-5"><circle cx="12" cy="7" r="5" fill="currentColor" /><path d="M3 22c0-11 18-11 18 0z" fill="currentColor" /></Svg></Slot>
        <Slot label="Skins" className="relative"><Svg className="size-5"><path d="M7 3c2 4 8 4 10 0l6 4-2 6-3-1v11H6V12l-3 1-2-6z" fill="currentColor" /></Svg><span className="absolute -right-1 -top-[6px] size-[9px] rounded-full bg-[#ff5030]" /></Slot>
        <Slot label="Settings"><Svg className="size-5"><path d="M12 1.500l3 3 5-.5.500 5 2.500 3-2.500 3-.5 5-5-.5-3 3-3-3-5 .5-.5-5-2.500-3 2.500-3L4 4l5 .5z" fill="currentColor" /><circle cx="12" cy="12" r="4.500" fill="#fff" /></Svg></Slot>
      </div>
    </div>
  </div>
);

/* ---------- Windows taskbar ---------- */

const apps = [
  { name: 'Visio', art: <><path d="M14 6h15v20H14z" fill="#fff" stroke="#3b56a5" strokeWidth="1.5" /><path d="M22 19v-8h3v3M18 19h4v3h-4z" stroke="#3b56a5" strokeWidth="1.500" /><circle cx="25" cy="10" r="2" stroke="#3b56a5" /><path d="M2 5l16-4v30L2 27z" fill="#3450a0" /><path d="M6 11l4 11 4-12" stroke="#fff" strokeWidth="2.200" /></> },
  { name: 'Edge', line: true, art: <><circle cx="16" cy="16" r="15" fill="#1378ca" /><path d="M1 15C2-4 31-4 31 14c0 6-6 7-11 5 2-5 0-9-6-9C8 9 3 12 1 15z" fill="#37c2c9" /><path d="M21 2c7 3 10 7 10 12 0 6-6 7-11 5 2-5 1-7-1-9z" fill="#64d86b" /><path d="M20 13c-7 0-8 9-3 13 4 3 9 2 13-1-5 8-16 8-21 1-6-9 2-17 11-13z" fill="#134f91" /><path d="M20 13c2 1 1 4 0 6 2 2 7 3 11 1l-1 4c-5 3-10 0-12-4-1-3 0-6 2-7z" fill="#d9dade" /></> },
  { name: 'PyCharm', art: <><path d="M2 2h28v28H2z" fill="#b9ee39" /><path d="M2 2h9v18H2z" fill="#20d783" /><path d="M5 5h21v22H5z" fill="#0b0b0b" /><path d="M9 16V9h3c3 0 3 4 0 4H9M23 10c-5-3-7 5-2 6h2M9 23h7" stroke="#fff" strokeWidth="1.700" /></> },
  { name: 'Explorer', art: <><path d="M3 4h12l2 4h13v6H3z" fill="#d99a17" /><path d="M3 8h27v20H3z" fill="#fccf56" /><path d="M7 30V18h18v12h-5v-6h-8v6z" fill="#3a8fce" /></> },
];

const moreApps = [
  { name: 'VS Code', art: <><path d="M1 11l4-3 19 15-2 8z" fill="#1b8dd4" /><path d="M1 21l4 3L24 9l-2-8z" fill="#1279bd" /><path d="M22 1l8 4v22l-8 4z" fill="#27a4ee" /></> },
  { name: 'Xunlei', art: <><rect x="1" y="1" width="30" height="30" rx="5" fill="#3f84fb" /><path d="M7 7c4 2 8 3 11 7 0-4 3-7 7-9l-1 6 5 1-4 2c0 5-3 9-7 11l5 4c-7 1-9-2-9-5-5 1-8-1-9-3l5-1c-4-2-5-5-5-7l6 2C8 12 7 10 7 7z" fill="#fff" /></> },
  { name: 'WPS', art: <><path d="M1 5h8l7 24h-6z" fill="#f32b24" /><path d="M10 29l7-24h7l-7 24z" fill="#ff6a30" /><path d="M11 6h6l2 8-3 9z" fill="#f8432a" /><path d="M25 5h6l-8 24h-7z" fill="#ee261f" /></> },
];

const Tray = () => (
  <div className="ml-auto flex h-full items-center text-black">
    <Slot label="Hidden icons" className="w-[30px]"><ChevronUp size={22} strokeWidth={1.3} /></Slot>
    <Slot label="Todesk" className="w-[30px]"><Svg><rect width="24" height="24" rx="4" fill="#f04e14" /><path d="M5 4l8 6 6-4v14l-8-7-6 5z" fill="#fff" /></Svg></Slot>
    <Slot label="Speakers" className="w-[30px]"><Svg><path d="M1 9h4l5-5v16l-5-5H1zM13 9c2 2 2 4 0 6" stroke="#000" strokeWidth="1.300" /><path d="M16 6c4 4 4 8 0 12M19 3c5 5 5 13 0 18" stroke="#888" strokeWidth="1.200" /></Svg></Slot>
    <Slot label="Update" className="w-[31px]"><Svg><path d="M1 4l21-3v21H1z" stroke="#000" strokeWidth="1.400" /><path d="M7 11c1-5 8-5 9-1M16 6v4h-4M16 12c-1 5-8 5-9 1M7 17v-4h4" stroke="#000" strokeWidth="1.400" /><circle cx="18" cy="19" r="5" fill="#2a72c0" /></Svg></Slot>
    <Slot label="Wi-Fi" className="w-[30px]"><Svg><path d="M2 22C3 10 12 3 22 3M6 22C7 13 13 8 22 8M11 22c1-6 5-9 11-9M16 22c0-3 2-5 6-5" stroke="#333" strokeWidth="1.300" /><circle cx="20" cy="21" r="2" fill="#000" /></Svg></Slot>
    <Slot label="Security" className="w-[30px]"><Svg><circle cx="12" cy="12" r="12" fill="#f9d21f" /><path d="M1 8A12 12 0 0 1 20 3C16 8 9 4 1 8zM23 16A12 12 0 0 1 4 21c4-5 11-1 19-5z" fill="#16a85a" /><path d="M12 7v11M6 12.500h12" stroke="#159448" strokeWidth="3" /></Svg></Slot>
    <Slot label="Battery" className="w-[30px]"><Svg><path d="M1 6h20v12H1zM21 10h2v4h-2" stroke="#000" strokeWidth="1.300" /><path d="M3 8h13v8H3z" fill="#000" /></Svg></Slot>
    <button type="button" className="w-[30px] text-[18px] text-[#555]">中</button>
    <Slot label="Input method" className="w-[41px]"><Wubi className="size-5" /></Slot>
    <button type="button" className="ml-[7px] flex size-[27px] items-center justify-center rounded-full bg-[#08d568] text-[14px] font-bold text-white">54</button>
    <div className="ml-4 w-[100px] text-[16px] leading-5">
      <div>10:44 周二</div>
      <div>2023/5/16</div>
    </div>
    <Slot label="Player" className="-ml-px size-5 bg-[#f8c146] text-white"><FaPlay size={8} /></Slot>
    <Slot label="Action center" className="relative ml-[30px]"><Svg><path d="M0 2h24v17h-4l-3 4v-4H0z" fill="#000" /><path d="M4 7h16M4 11h16M4 15h11" stroke="#ddd" strokeWidth="1.500" /></Svg><span className="absolute -bottom-3 -right-[11px] flex size-5 items-center justify-center rounded-full border border-[#666] bg-[#ccd3da] text-[13px] font-bold">2</span></Slot>
    <div className="ml-[25px] mr-[5px] h-full w-px bg-[#a8b0b8]" />
  </div>
);

const Taskbar = () => (
  <footer className="relative flex h-[50px] items-center bg-linear-to-r from-[#d9dade] from-40% via-[#ebebec] via-60% to-[#d3dde6] to-75%">
    <Slot label="Start" className="w-[60px]"><Svg className="size-5"><path d="M0 4l10-2v9H0zM11 2l13-2v11H11zM0 12h10v10L0 20zM11 12h13v12l-13-2z" fill="#000" /></Svg></Slot>
    <Slot label="Search" className="w-[60px]"><Svg className="size-7"><circle cx="14" cy="9.500" r="8.500" stroke="#000" strokeWidth="2" /><path d="M8 16l-7 7" stroke="#000" strokeWidth="2.500" /></Svg></Slot>
    <Slot label="Copilot" className="ml-[1px] w-[62px]"><Svg className="size-7"><g fill="#000" stroke="#d9dade" strokeWidth=".8"><path d="M12 12C6 17 0 13 0 7s5-8 10-6c-2 3-1 7 2 11z" /><path d="M12 12C7 6 12-1 18 0s8 7 5 10c-3-2-8-1-11 2z" /><path d="M12 12c6-5 12-1 12 5s-5 8-10 6c2-3 1-7-2-11z" /><path d="M12 12c5 6 0 13-6 12s-8-7-5-10c3 2 8 1 11-2z" /></g></Svg></Slot>
    <div className="ml-[2px] flex h-[43px] w-[267px] items-center bg-[#ececec] text-black">
      <Svg className="ml-2 size-[23px]"><path d="M20 14H8c1 6 8 6 11 2h4C19 26 3 24 4 12 5 2 23 1 22 14M8 10h10c-1-5-8-6-10 0z" fill="#3295f5" /><path d="M4 10C-1 18-1 26 8 21M13 3c8-4 12-2 9 6" stroke="#52b8ff" strokeWidth="2" /></Svg>
      <Svg className="ml-[5px] h-[5px] w-[7px]" box="0 0 7 5"><path d="M2 0h3l2 5H0z" fill="#999" /></Svg>
      <input type="text" aria-label="Search the web" defaultValue="怀孕后发现男友已婚" className="ml-[6px] min-w-0 flex-1 pb-[2px] text-[16px] outline-none" />
      <button type="button" className="h-full w-[70px] bg-[#2389ff] text-[15px] text-white">搜索一下</button>
    </div>
    <div className="ml-[5px] flex h-full">
      {apps.map((a) => (
        <Slot key={a.name} label={a.name} className="relative h-full w-[62px]">
          <Svg className="size-[30px]" box="0 0 32 32">{a.art}</Svg>
          {a.line && <span className="absolute inset-x-[6px] bottom-0 h-[3px] bg-[#0078d7]" />}
        </Slot>
      ))}
      <Slot label="VMware" className="h-full w-[57px] border-b-[3px] border-r border-b-[#0078d7] border-r-[#bbb] bg-[#f0f1f3]"><VmwareLogo className="size-[30px]" /></Slot>
      <div className="h-full w-1 border-b-[3px] border-[#5ba6e2] bg-[#e4e5e8]" />
      <Slot label="WeChat" className="relative h-full w-[62px]">
        <Svg className="size-[30px]" box="0 0 32 32"><path d="M12 3C-4 3-3 19 4 22l-1 5 5-3c16 2 20-19 4-21z" fill="#2dcf6b" /><circle cx="8" cy="10" r="1.500" fill="#156b38" /><circle cx="16" cy="10" r="1.500" fill="#156b38" /><ellipse cx="22" cy="21" rx="9.500" ry="8" fill="#eee" /><path d="M24 28l5 3v-5z" fill="#eee" /><circle cx="19" cy="19" r="1.300" fill="#666" /><circle cx="25" cy="19" r="1.300" fill="#666" /></Svg>
        <span className="absolute inset-x-[6px] bottom-0 h-[3px] bg-[#0078d7]" />
      </Slot>
      {moreApps.map((a) => (
        <Slot key={a.name} label={a.name} className="h-full w-[62px]"><Svg className="size-[30px]" box="0 0 32 32">{a.art}</Svg></Slot>
      ))}
    </div>
    <Tray />
    <span className="pointer-events-none absolute bottom-1 right-[15px] text-[16px] text-white/70 [text-shadow:1px_1px_1px_#777]">CSDN @cdssywgyxx</span>
  </footer>
);

export default function App() {
  return (
    <div className="flex min-h-screen flex-col font-['Noto_Sans','Noto_Sans_CJK_SC',sans-serif]">
      <TitleBar />
      <VmToolbar />
      <KaliPanel />
      <Browser />
      <Nessus />
      <Taskbar />
      <ImeBar />
    </div>
  );
}
